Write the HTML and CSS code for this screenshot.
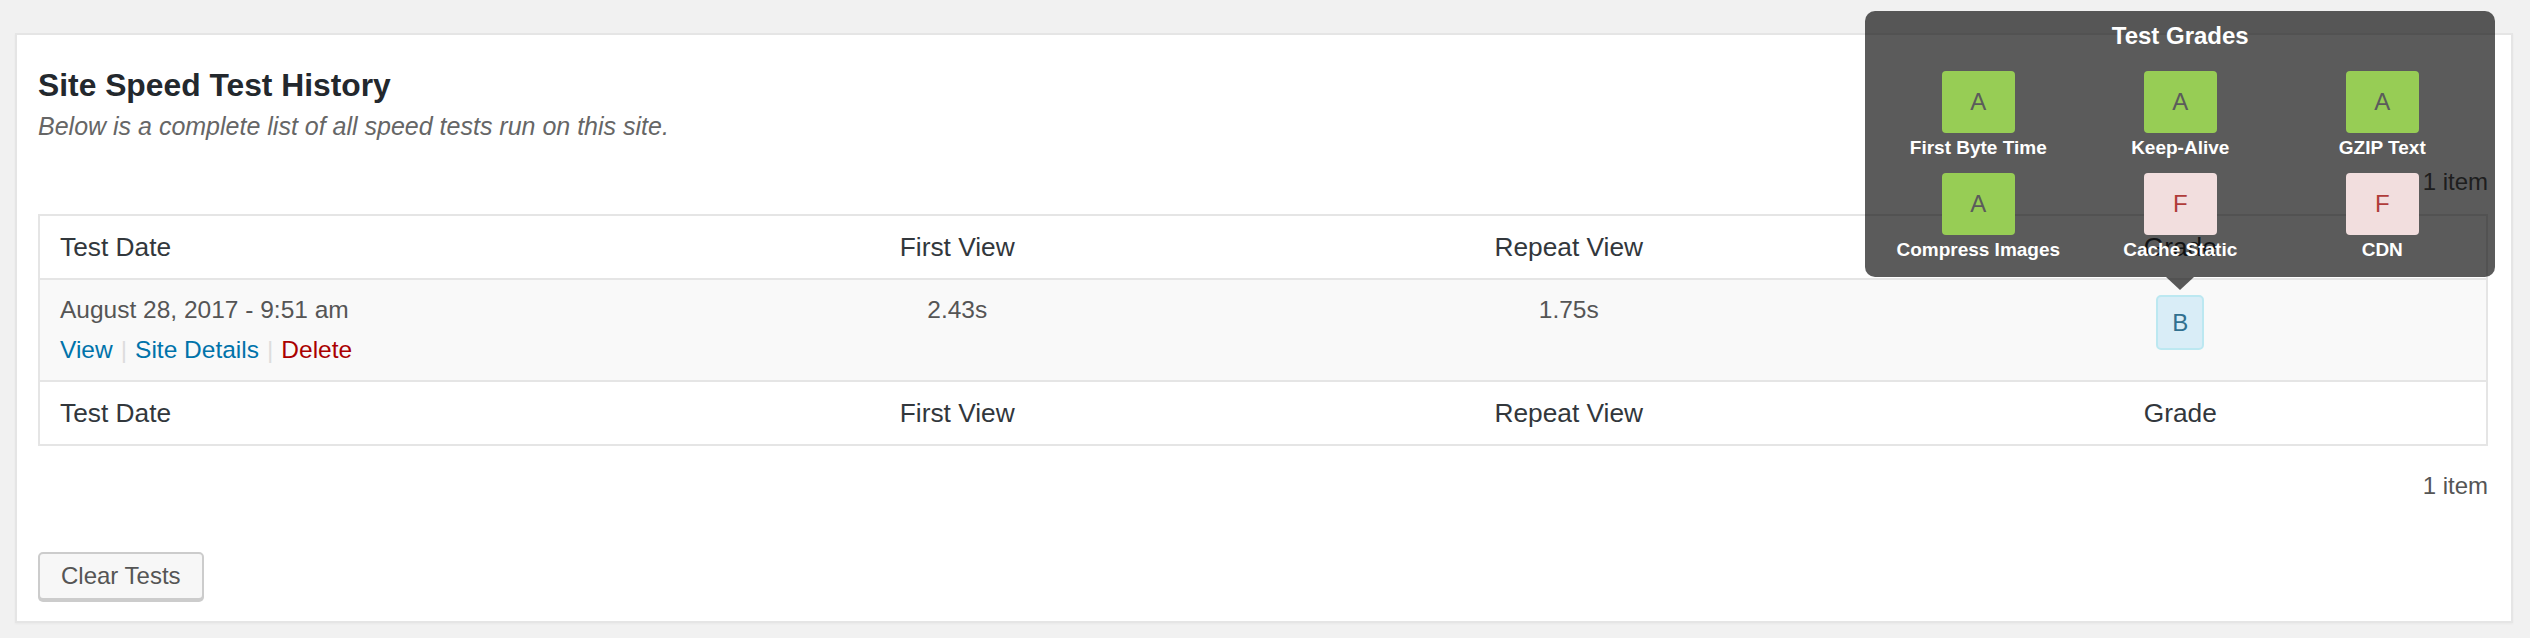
FILE: index.html
```html
<!DOCTYPE html>
<html lang="en">
<head>
<meta charset="utf-8">
<title>Site Speed Test History</title>
<link rel="stylesheet" href="styles.css">
</head>
<body>
<div class="wrap">
  <div class="card">
    <h2 class="card-title">Site Speed Test History</h2>
    <p class="description">Below is a complete list of all speed tests run on this site.</p>
    <div class="tablenav tablenav-top"><span class="displaying-num">1 item</span></div>
    <table class="history">
      <thead>
        <tr><th class="col-date">Test Date</th><th>First View</th><th>Repeat View</th><th>Grade</th></tr>
      </thead>
      <tbody>
        <tr>
          <td class="col-date">
            <div class="date">August 28, 2017 - 9:51 am</div>
            <div class="row-actions"><a class="link">View</a><span class="sep">|</span><a class="link">Site Details</a><span class="sep">|</span><a class="link delete">Delete</a></div>
          </td>
          <td class="num">2.43s</td>
          <td class="num">1.75s</td>
          <td class="grade-cell">
            <div class="grade-center">
              <div class="grade-holder">
                <span class="badge">B</span>
                <div class="tooltip">
                  <div class="tooltip-title">Test Grades</div>
                  <div class="grade-grid">
                    <div class="grade-item"><span class="grade-box grade-a">A</span><span class="grade-label">First Byte Time</span></div>
                    <div class="grade-item"><span class="grade-box grade-a">A</span><span class="grade-label">Keep-Alive</span></div>
                    <div class="grade-item"><span class="grade-box grade-a">A</span><span class="grade-label">GZIP Text</span></div>
                    <div class="grade-item"><span class="grade-box grade-a">A</span><span class="grade-label">Compress Images</span></div>
                    <div class="grade-item"><span class="grade-box grade-f">F</span><span class="grade-label">Cache Static</span></div>
                    <div class="grade-item"><span class="grade-box grade-f">F</span><span class="grade-label">CDN</span></div>
                  </div>
                </div>
              </div>
            </div>
          </td>
        </tr>
      </tbody>
      <tfoot>
        <tr><th class="col-date">Test Date</th><th>First View</th><th>Repeat View</th><th>Grade</th></tr>
      </tfoot>
    </table>
    <div class="tablenav tablenav-bottom"><span class="displaying-num">1 item</span></div>
    <div class="actions"><button class="button" type="button">Clear Tests</button></div>
  </div>
</div>
</body>
</html>
```
FILE: styles.css
```css
* { box-sizing: border-box; }
html, body { margin: 0; padding: 0; }
body {
  background: #f1f1f1;
  font-family: "Liberation Sans", Arial, sans-serif;
  color: #444;
  width: 2530px;
  height: 638px;
  overflow: hidden;
}
.wrap { padding: 33px 17px 0 15px; }
.card {
  background: #fff;
  border: 2px solid #e5e5e5;
  box-shadow: 0 1px 2px rgba(0, 0, 0, 0.04);
  padding: 30px 23px 21px 21px;
}
.card-title {
  margin: 0;
  font-size: 31.8px;
  line-height: 40px;
  font-weight: 700;
  color: #23282d;
}
.description {
  margin: 4px 0 0;
  font-size: 25px;
  line-height: 34px;
  font-style: italic;
  color: #666;
}
.tablenav {
  height: 56px;
  display: flex;
  align-items: center;
  justify-content: flex-end;
  font-size: 24px;
  color: #555;
}
.tablenav-top { margin: 11px 0 4px; }
.tablenav-bottom { margin-top: 12px; }

.history {
  width: 100%;
  table-layout: fixed;
  border-collapse: separate;
  border-spacing: 0;
  border: 2px solid #e5e5e5;
}
.history th {
  padding: 16px 20px;
  font-size: 26.3px;
  line-height: 30px;
  font-weight: 400;
  color: #32373c;
  text-align: center;
}
.history th.col-date { text-align: left; }
.history thead th { border-bottom: 2px solid #e5e5e5; }
.history tfoot th { border-top: 2px solid #e5e5e5; }
.history td {
  background: #f9f9f9;
  padding: 15px 20px 14px;
  vertical-align: top;
  font-size: 24.5px;
  line-height: 30px;
  color: #555;
}
.history td.num { text-align: center; }
.date { line-height: 30px; }
.row-actions { padding-top: 9px; line-height: 32px; }
.link { color: #0073aa; text-decoration: none; }
.link.delete { color: #a00; }
.sep { color: #ddd; margin: 0 8px; }

.grade-center { display: flex; justify-content: center; }
.grade-holder { position: relative; }
.badge {
  display: flex;
  align-items: center;
  justify-content: center;
  width: 48px;
  height: 55px;
  border: 2px solid #bce8f1;
  border-radius: 5px;
  background: #d9edf7;
  color: #31708f;
  font-size: 24px;
  line-height: 1;
}

.tooltip {
  position: absolute;
  bottom: calc(100% + 18px);
  left: 50%;
  width: 630px;
  margin-left: -315px;
  padding: 10px 12px 15px;
  background: rgba(0, 0, 0, 0.643);
  border-radius: 10px;
  color: #fff;
  text-align: center;
}
.tooltip::after {
  content: "";
  position: absolute;
  top: 100%;
  left: 50%;
  margin-left: -14px;
  border-left: 14px solid transparent;
  border-right: 14px solid transparent;
  border-top: 13px solid rgba(0, 0, 0, 0.643);
}
.tooltip-title {
  font-size: 24px;
  line-height: 30px;
  font-weight: 700;
}
.grade-grid {
  margin-top: 20px;
  display: grid;
  grid-template-columns: repeat(3, 1fr);
  row-gap: 13px;
}
.grade-item {
  display: flex;
  flex-direction: column;
  align-items: center;
}
.grade-box {
  width: 73px;
  height: 62px;
  border-radius: 4px;
  display: flex;
  align-items: center;
  justify-content: center;
  font-size: 24px;
  line-height: 1;
}
.grade-a { background: #97cd55; color: #5b5b5b; }
.grade-f { background: #f2dede; color: #b03c3a; }
.grade-label {
  margin-top: 3px;
  font-size: 19px;
  line-height: 24px;
  font-weight: 700;
  white-space: nowrap;
}

.actions { display: flex; margin-top: 38px; }
.button {
  height: 48px;
  padding: 0 21px;
  border: 2px solid #ccc;
  border-radius: 5px;
  background: #f7f7f7;
  box-shadow: 0 2px 0 #ccc;
  font-family: "Liberation Sans", Arial, sans-serif;
  font-size: 24px;
  line-height: 44px;
  color: #555;
  cursor: pointer;
}
```
